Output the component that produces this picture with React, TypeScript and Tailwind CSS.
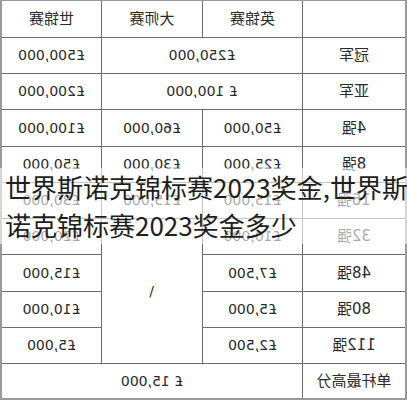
import React from 'react';

// Table is shown mirrored in the reference, so it is laid out normally and flipped.
const cell = 'bg-white flex items-center justify-center';
const label = `${cell} text-[15px]`;

const rows: { label: string; ying: string; da?: string; shi: string }[] = [
    { label: '4强', ying: '£50,000', da: '£60,000', shi: '£100,000' },
    { label: '8强', ying: '£25,000', da: '£30,000', shi: '£50,000' },
    { label: '16强', ying: '£15,000', da: '£15,000', shi: '£30,000' },
    { label: '32强', ying: '£10,000', shi: '£20,000' },
    { label: '48强', ying: '£7,500', shi: '£15,000' },
    { label: '80强', ying: '£5,000', shi: '£10,000' },
    { label: '112强', ying: '£2,500', shi: '£5,000' },
];

const App = () => {
    return (
        <div className="relative w-[407px] h-[400px] overflow-hidden bg-white">
            <div className="-scale-x-100">
                <div
                    className="grid grid-cols-[102px_99px_100px_99px] grid-rows-[36px_35px_35px_36px_35px_35px_35px_36px_35px_35px_34px] gap-px bg-[#6b6b6b] border-x-2 border-t border-b-2 border-[#999] text-[14px] text-[#2a2a2a]"
                    style={{ fontFamily: '"DejaVu Sans", "Noto Sans CJK SC", sans-serif' }}
                >
                    {/* header */}
                    <div className={cell}></div>
                    <div className={label}>英锦赛</div>
                    <div className={label}>大师赛</div>
                    <div className={label}>世锦赛</div>

                    <div className={label}>冠军</div>
                    <div className={`${cell} col-span-2`}>£250,000</div>
                    <div className={cell}>£500,000</div>

                    <div className={label}>亚军</div>
                    <div className={`${cell} col-span-2`}>£ 100,000</div>
                    <div className={cell}>£200,000</div>

                    {rows.map((r, i) => (
                        <React.Fragment key={r.label}>
                            <div className={label}>{r.label}</div>
                            <div className={cell}>{r.ying}</div>
                            {r.da !== undefined && <div className={cell}>{r.da}</div>}
                            {i === 3 && (
                                <div className={`${cell} row-span-4`}>
                                    <span className="-scale-x-100">/</span>
                                </div>
                            )}
                            <div className={cell}>{r.shi}</div>
                        </React.Fragment>
                    ))}

                    <div className={label}>单杆最高分</div>
                    <div className={`${cell} col-span-3`}>£ 15,000</div>
                </div>
            </div>

            {/* caption over the table */}
            <div
                className="absolute left-0 top-[168px] w-full bg-white/60 pl-[5px] text-[26px] leading-[38px] text-[#1e1e1e] whitespace-nowrap"
                style={{ fontFamily: '"Noto Sans CJK SC", sans-serif' }}
            >
                <div>世界斯诺克锦标赛2023奖金,世界斯</div>
                <div>诺克锦标赛2023奖金多少</div>
            </div>
        </div>
    );
};

export default App;
